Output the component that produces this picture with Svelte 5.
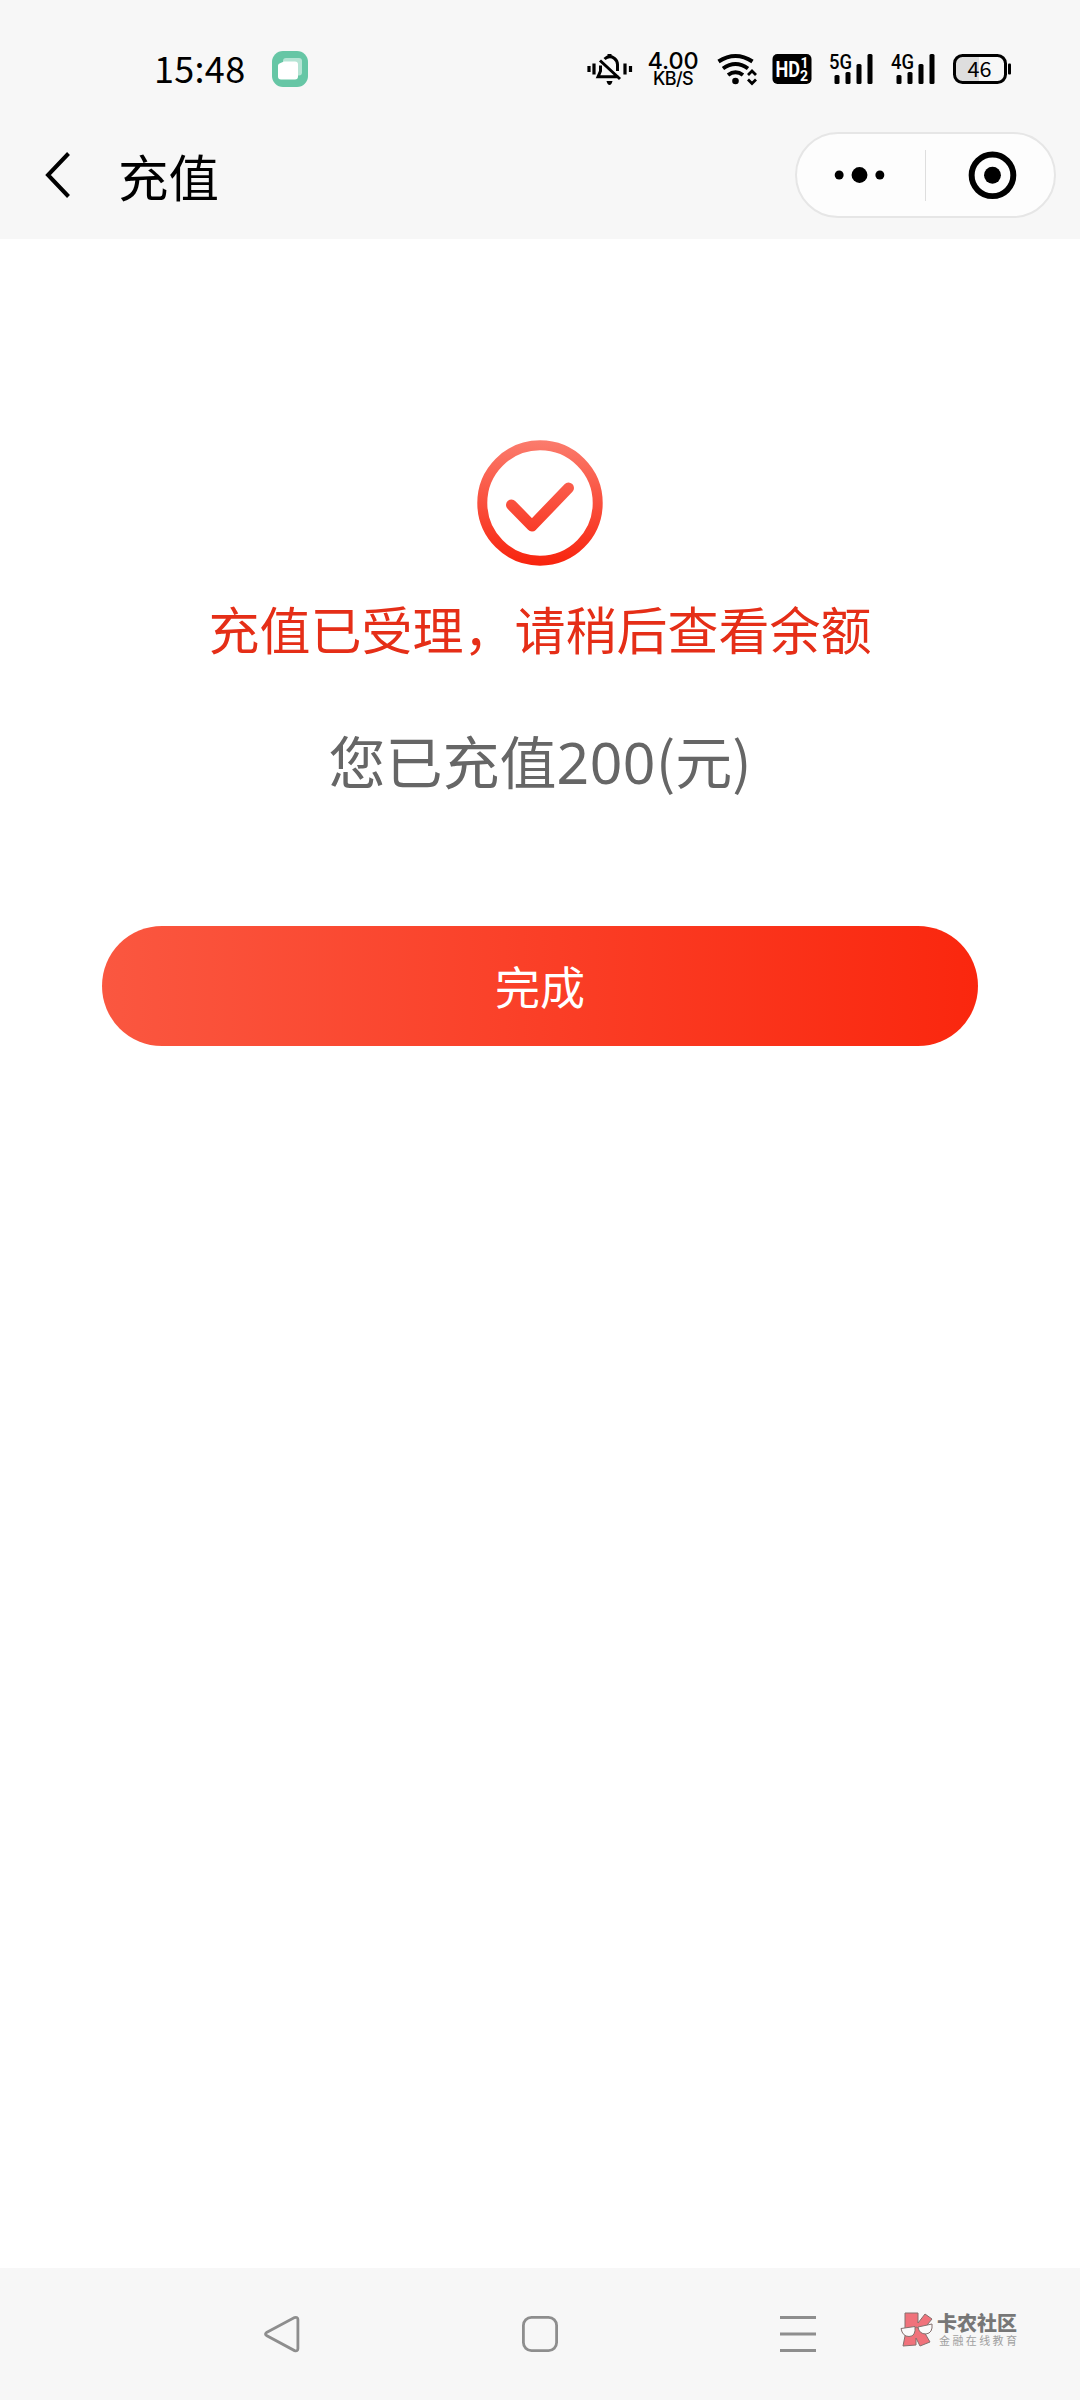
<script lang="ts">
  interface Signal {
    readonly label: string;
    readonly bars: number[];
  }

  const time = "15:48";
  const battery = 46;
  const amount = 200;

  // bar heights in px, left to right
  const signals: Signal[] = [
    { label: "5G", bars: [9, 12, 20, 30] },
    { label: "4G", bars: [9, 12, 20, 30] },
  ];

  let done = $state(false);
</script>

<div class="screen">
  <header>
    <div class="status">
      <span class="time">{time}</span>
      <svg class="app-dot" width="36" height="36" viewBox="0 0 36 36">
        <rect width="36" height="36" rx="11" fill="#66c6a5" />
        <rect x="11" y="7" width="19" height="17.5" rx="3" fill="#b5e4d4" />
        <path d="M12 10.500h11q3 0 3 3v12q0 3-3 3H9q-3 0-3-3V14.500q0-2 2.500-2.500z" fill="#fff" />
      </svg>

      <div class="status-right">
        <svg width="48" height="36" viewBox="0 0 48 36" fill="none" stroke="#000">
          <path d="M2 15v6M7 12.500v11M38 12.500v11M43.500 15v6" stroke-width="3.200" />
          <path d="M13.500 14.500v5.500l-2.500 5.800h20.500M17.500 8q5-4.500 10-.5q3 2.500 3 6v6.500M13 9.500l20 18.500" stroke-width="3" />
          <path d="M22.500 3v3" stroke-width="4" />
          <path d="M19.500 30h6q-1 4-3 4t-3-4z" fill="#000" stroke="none" />
        </svg>

        <div class="speed">
          <span class="speed-num">4.00</span>
          <span class="speed-unit">KB/S</span>
        </div>

        <svg class="wifi" width="40" height="36" viewBox="0 0 40 36" fill="none" stroke="#000" stroke-width="4">
          <path d="M.5 10.500q17-11 34 0M5 17.500q12.500-9 25 0M10 24q7.500-5.500 15 0" />
          <circle cx="17.500" cy="30" r="3.300" fill="#000" stroke="none" />
          <path d="M30 24l4-4 4 4M30 28.500l4 4 4-4" stroke-width="2.800" />
        </svg>

        <svg class="hd" width="39" height="36" viewBox="0 0 39 36">
          <rect x="-.5" y="3" width="39" height="30" rx="5" />
          <text x="2.500" y="26" textLength="24.500" lengthAdjust="spacingAndGlyphs" font-size="22">HD</text>
          <text x="27.500" y="17" font-size="14">1</text>
          <text x="27" y="30" font-size="14">2</text>
        </svg>

        {#each signals as s}
          <svg class="signal" width="44" height="36" viewBox="0 0 44 36">
            <text x="-1" y="17.500" textLength="23" lengthAdjust="spacingAndGlyphs">{s.label}</text>
            {#each s.bars as h, i}
              <rect x={4.5 + i * 11} y={33 - h} width="5" height={h} rx="1.500" />
            {/each}
          </svg>
        {/each}

        <svg class="battery" width="59" height="36" viewBox="0 0 59 36">
          <rect x="1.500" y="4.500" width="51" height="27" rx="8" fill="#f7f7f7" />
          <path d="M9 4.500h17v27H9q-7.500 0-7.500-8v-11q0-8 7.500-8z" fill="#dedede" />
          <rect x="1.500" y="4.500" width="51" height="27" rx="8" fill="none" stroke="#000" stroke-width="3" />
          <rect x="55" y="12.500" width="3" height="11" rx="1" />
          <text x="14.500" y="25.500" textLength="24" lengthAdjust="spacingAndGlyphs">{battery}</text>
        </svg>
      </div>
    </div>

    <div class="nav">
      <svg class="back" width="26" height="48" viewBox="0 0 26 48" fill="none" stroke="#000" stroke-width="4">
        <path d="M24.500 2.500L4 24l20.500 21.500" />
      </svg>
      <h1>充值</h1>
      <div class="capsule">
        <svg width="129" height="50" viewBox="0 0 129 50">
          <circle cx="42.500" cy="25" r="4.500" />
          <circle cx="63" cy="25" r="8" />
          <circle cx="83.500" cy="25" r="4.500" />
        </svg>
        <span class="divider"></span>
        <svg width="129" height="50" viewBox="0 0 129 50">
          <circle cx="67" cy="25.300" r="21" fill="none" stroke="#000" stroke-width="6" />
          <circle cx="67" cy="25.300" r="8.500" />
        </svg>
      </div>
    </div>
  </header>

  <main>
    <svg width="126" height="126" viewBox="0 0 126 126" fill="none" stroke="url(#red)" stroke-width="10">
      <defs>
        <linearGradient id="red" gradientUnits="userSpaceOnUse" x1="0" y1="0" x2="0" y2="126">
          <stop offset="0" stop-color="#fb7c6d" />
          <stop offset="1" stop-color="#f8230d" />
        </linearGradient>
      </defs>
      <circle cx="63" cy="63" r="57.700" />
      <path d="M34.500 65l20.500 21L91.500 48" stroke-width="11" stroke-linecap="round" stroke-linejoin="round" />
    </svg>
    <p class="message">充值已受理，请稍后查看余额</p>
    <p class="amount">您已充值<span>{amount}</span>(元)</p>
    <button class="done-btn" onclick={() => (done = true)}>完成</button>
  </main>

  <footer>
    <div class="keys">
      <svg width="36" height="36" viewBox="0 0 36 36">
        <path d="M2.500 16.500L30.500 1.600q3.400-1 3.400 2v29q0 3-3.400 2L2.500 19.500q-2-1.500 0-3z" />
      </svg>
      <svg width="36" height="36" viewBox="0 0 36 36">
        <rect x="1.400" y="1.400" width="33.200" height="33.200" rx="8" />
      </svg>
      <svg width="36" height="36" viewBox="0 0 36 36">
        <path d="M0 1.500h36M0 18h36M0 34.500h36" />
      </svg>
    </div>
    <div class="brand">
      <svg width="34" height="36" viewBox="0 0 34 36" stroke="#85716f" stroke-width="1">
        <path d="M5 1h13v10l7-9 7 5-9 11 7 12-10 4-4-8v7l-13 1 2-10z" fill="#f0727b" />
        <path d="M1 16.500l14-2q1 10-6 10q-6.500 0-8-8zM18 15l14-3q1 9-6 10q-7 0-8-7z" fill="#fafafa" />
        <path d="M15 16q1.500-1.500 3 0" fill="none" />
      </svg>
      <div class="brand-text">
        <strong>卡农社区</strong>
        <small>金融在线教育</small>
      </div>
    </div>
  </footer>
</div>

<style>
  :global(body) {
    margin: 0;
    background: #fff;
  }

  .screen {
    width: 1080px;
    height: 2400px;
    display: flex;
    flex-direction: column;
    font-family: "Noto Sans CJK SC", sans-serif;
    color: #000;
    overflow: hidden;
  }

  svg {
    display: block;
    flex: none;
    overflow: visible;
  }

  header {
    background: #f7f7f7;
    height: 239px;
    flex: none;
  }

  .status {
    height: 112px;
    box-sizing: border-box;
    padding: 26px 68px 0 154px;
    display: flex;
    align-items: center;
  }

  .time {
    padding-bottom: 4px;
    font-size: 36px;
    line-height: 40px;
    width: 118px;
    letter-spacing: 0.3px;
  }

  .status-right {
    display: flex;
    align-items: center;
    margin-left: auto;
  }

  .speed {
    width: 52px;
    margin-left: 12px;
    display: flex;
    flex-direction: column;
    align-items: center;
    font-family: Inter, sans-serif;
    font-weight: 500;
  }

  .speed-num {
    font-size: 23.500px;
    line-height: 19px;
    letter-spacing: -0.1px;
  }

  .speed-unit {
    font-size: 18px;
    line-height: 18px;
    letter-spacing: -0.6px;
  }

  .wifi {
    margin-left: 19px;
  }

  .hd {
    margin-left: 15px;
    font-family: Roboto, sans-serif;
    font-weight: 700;
  }

  .hd text {
    fill: #fff;
  }

  .signal {
    margin-left: 18px;
    font-family: Roboto, sans-serif;
    font-weight: 500;
    font-size: 19.500px;
  }

  .battery {
    margin-left: 17px;
    font-size: 21px;
  }

  .nav {
    height: 126px;
    box-sizing: border-box;
    padding: 0 24px 0 44px;
    display: flex;
    align-items: center;
  }

  h1 {
    margin: 0 0 0 48px;
    padding-bottom: 1px;
    font-size: 50.500px;
    line-height: 60px;
    font-weight: 400;
  }

  .capsule {
    width: 261px;
    height: 86px;
    box-sizing: border-box;
    margin-left: auto;
    border: 2px solid #e6e6e6;
    border-radius: 43px;
    background: #fdfdfd;
    display: flex;
    align-items: center;
  }

  .divider {
    width: 1px;
    height: 51px;
    flex: none;
    background: #dedede;
  }

  .capsule svg {
    flex: 0 1 129px;
    min-width: 0;
  }

  main {
    flex: 1;
    display: flex;
    flex-direction: column;
    align-items: center;
    padding-top: 201px;
  }

  p {
    margin: 0;
    white-space: nowrap;
  }

  .message {
    margin-top: 27px;
    font-size: 51px;
    line-height: 70px;
    color: #e52e17;
  }

  .amount {
    height: 80px;
    margin-top: 56px;
    font-size: 57px;
    line-height: 80px;
    color: #666;
  }

  .amount span {
    font-family: "Noto Sans", sans-serif;
    line-height: 1;
    letter-spacing: 0.5px;
  }

  .done-btn {
    width: 876px;
    height: 120px;
    margin-top: 127px;
    padding: 0 0 2px;
    border: none;
    border-radius: 60px;
    background: linear-gradient(90deg, #fa5740, #fa270e);
    color: #fff;
    font-family: inherit;
    font-size: 45px;
    cursor: pointer;
  }

  footer {
    height: 132px;
    flex: none;
    box-sizing: border-box;
    padding-left: 264px;
    background: #f7f7f7;
    display: flex;
    align-items: center;
  }

  .keys {
    display: flex;
    gap: 222px;
  }

  .keys svg {
    fill: none;
    stroke: #8e8e8e;
    stroke-width: 2.800px;
  }

  .brand {
    margin-left: 84px;
    padding-bottom: 8px;
    display: flex;
    align-items: center;
    gap: 3px;
  }

  .brand-text {
    display: flex;
    flex-direction: column;
  }

  .brand-text strong {
    font-size: 20px;
    line-height: 21px;
    font-weight: 900;
    color: #777;
  }

  .brand-text small {
    padding-left: 2px;
    font-size: 11px;
    line-height: 15px;
    letter-spacing: 2.400px;
    color: #a0a0a0;
  }
</style>
